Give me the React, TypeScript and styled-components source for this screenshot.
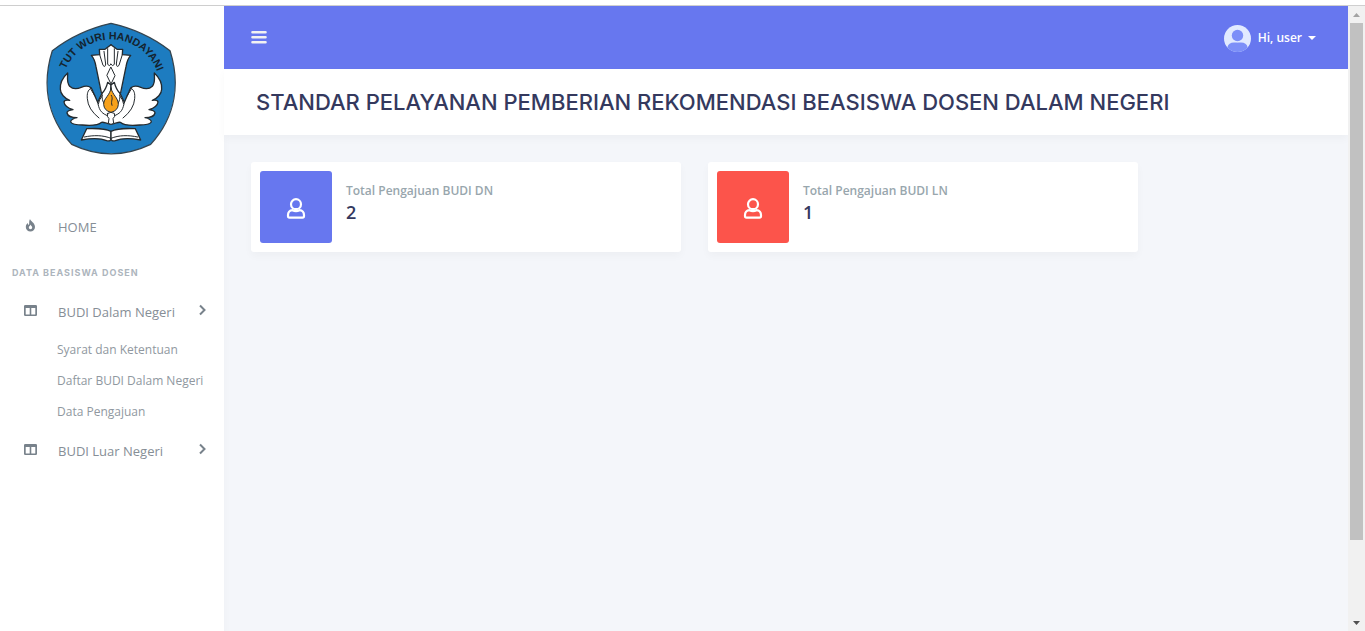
import React from "react";
import styled, { createGlobalStyle } from "styled-components";

const GlobalStyle = createGlobalStyle`
  *, *::before, *::after { box-sizing: border-box; }
  body {
    margin: 0;
    background: #f4f6fa;
    color: #34395e;
    font-family: "Open Sans", "Liberation Sans", sans-serif;
    font-size: 13px;
  }
  h1, h2, h3, p, ul { margin: 0; padding: 0; }
  ul { list-style: none; }
  a { color: inherit; text-decoration: none; }
  button { font: inherit; color: inherit; background: none; border: 0; padding: 0; cursor: pointer; }
`;

const Page = styled.div`
  display: flex;
  flex-direction: column;
  height: 100vh;
  overflow: hidden;
`;

const TopEdge = styled.div`
  flex: none;
  height: 6px;
  background: #fff;
  border-bottom: 1px solid #cfcfcf;
`;

const Shell = styled.div`
  flex: 1;
  min-height: 0;
  display: grid;
  grid-template-columns: 224px minmax(0, 1fr) 17px;
`;

const Sidebar = styled.aside`
  background: #fff;
  box-shadow: 0 4px 8px rgba(0, 0, 0, 0.03);
`;

const Brand = styled.a`
  display: flex;
  padding: 16px 0 53px 46px;
`;

const MenuItem = styled.a`
  display: flex;
  align-items: center;
  height: 36px;
  padding: 0 16px 0 24px;
  color: #868e96;
  font-size: 13px;

  svg { flex: none; }
  span { flex: 1; margin-left: 21px; padding-top: 2px; white-space: nowrap; }
`;

const MenuHeader = styled.h2`
  padding: 0 12px;
  margin: 20px 0 11px;
  font-family: Inter, "Open Sans", sans-serif;
  font-size: 9px;
  line-height: 18px;
  font-weight: 700;
  letter-spacing: 1px;
  color: #adb5bd;
  text-transform: uppercase;
`;

const SubMenu = styled.ul`
  padding: 5px 0;
`;

const SubLink = styled.a`
  display: block;
  padding-left: 57px;
  font-size: 12px;
  line-height: 31px;
  color: #9098a0;
  white-space: nowrap;
`;

const Main = styled.main`
  min-width: 0;
`;

const Navbar = styled.header`
  display: flex;
  align-items: center;
  justify-content: space-between;
  height: 63px;
  padding: 0 32px 0 27px;
  background: #6777ef;
  color: #fff;
`;

const ToggleButton = styled.button`
  display: flex;
`;

const UserButton = styled.button`
  display: flex;
  align-items: center;
  padding-top: 2px;
  font-size: 12px;
  font-weight: 600;
`;

const UserName = styled.span`
  margin: 0 6px 2px 7px;
`;

const TitleBar = styled.section`
  padding: 18px 32px;
  background: #fff;
  box-shadow: 0 4px 8px rgba(0, 0, 0, 0.03);
`;

const Title = styled.h1`
  font-family: Inter, "Open Sans", sans-serif;
  font-size: 22px;
  line-height: 30px;
  font-weight: 500;
  white-space: nowrap;
`;

const Cards = styled.section`
  display: grid;
  grid-template-columns: repeat(2, minmax(0, 430fr)) minmax(0, 156fr);
  gap: 27px;
  padding: 27px;
`;

const Card = styled.article`
  display: flex;
  gap: 14px;
  padding: 9px;
  background: #fff;
  border-radius: 3px;
  box-shadow: 0 4px 8px rgba(0, 0, 0, 0.03);
`;

const CardIcon = styled.div<{ $color: string }>`
  display: flex;
  align-items: center;
  justify-content: center;
  width: 72px;
  height: 72px;
  padding-top: 2px;
  border-radius: 3px;
  background: ${(p) => p.$color};
`;

const CardLabel = styled.h3`
  padding-top: 11px;
  font-size: 12px;
  line-height: 18px;
  font-weight: 600;
  color: #98a6ad;
`;

const CardValue = styled.p`
  font-size: 18px;
  line-height: 24px;
  font-weight: 600;
`;

const ScrollTrack = styled.div`
  display: flex;
  flex-direction: column;
  align-items: center;
  background: #f1f1f1;
`;

const ScrollArrow = styled.div`
  display: flex;
  align-items: center;
  height: 17px;
`;

const ScrollRun = styled.div`
  flex: 1;
  width: 13px;
`;

const ScrollThumb = styled.div`
  height: 87.5%;
  background: #c1c1c1;
`;

const Fire = () => (
  <svg width="13" height="17" viewBox="0 0 13 17" aria-hidden="true">
    <path fill="#78828b" fillRule="evenodd" d="M6 1C6.300 3 11 4.700 11 9A4.600 4.600 0 0 1 1.800 9C1.800 7.100 2.800 5.900 3.800 5.100C4 6.200 4.100 6.700 4.700 7C5.800 5.600 4.500 3.200 6 1ZM6.300 6.500C6.400 8 4.700 8.200 4.800 9.600A1.700 1.700 0 0 0 8.200 9.600C8.200 8.400 7.400 8.200 6.300 6.500Z" />
  </svg>
);

const Columns = () => (
  <svg width="13" height="15" viewBox="0 0 13 15" aria-hidden="true">
    <path fill="#78828b" fillRule="evenodd" d="M1.200 1H11.800Q13 1 13 2.200V10.800Q13 12 11.800 12H1.200Q0 12 0 10.800V2.200Q0 1 1.200 1ZM1.700 4V10.400H5.700V4ZM7.300 4V10.400H11.300V4Z" />
  </svg>
);

const Chevron = () => (
  <svg width="10" height="14" viewBox="0 0 10 14" aria-hidden="true">
    <path d="M2 1.500L6.500 6L2 10.500" fill="none" stroke="#78828b" strokeWidth="2" />
  </svg>
);

const Bars = () => (
  <svg width="16" height="16" viewBox="0 0 16 16" aria-hidden="true">
    <path d="M1.500 2.200H14.500M1.500 7.200H14.500M1.500 12.200H14.500" stroke="#f2f2f2" strokeWidth="2.600" strokeLinecap="round" />
  </svg>
);

const Avatar = () => (
  <svg width="27" height="27" viewBox="0 0 27 27" aria-hidden="true">
    <defs><clipPath id="avatar"><circle cx="13.500" cy="13.500" r="13.500" /></clipPath></defs>
    <g clipPath="url(#avatar)">
      <rect width="27" height="27" fill="#e1eaff" />
      <path d="M3.500 27V22Q4.500 17.500 10 17.500H17Q22.500 17.500 23.500 22V27Z" fill="#7c8ff8" />
      <circle cx="13.500" cy="10.700" r="6.600" fill="#e1eaff" />
      <circle cx="13.500" cy="10.500" r="5.700" fill="#7c8ff8" />
    </g>
  </svg>
);

const Caret = () => (
  <svg width="8" height="6" viewBox="0 0 8 6" aria-hidden="true"><path d="M0 0H8L4 4Z" fill="#fff" /></svg>
);

const Person = () => (
  <svg width="20" height="22" viewBox="0 0 20 22" aria-hidden="true">
    <g fill="none" stroke="#fff" strokeWidth="2.200">
      <circle cx="10" cy="7.200" r="5" />
      <path d="M6.500 13.200C3.500 13.200 2 15.500 2 18V19Q2 20.700 3.500 20.700H16.500Q18 20.700 18 19V18C18 15.500 16.500 13.200 13.500 13.200Q10 15 6.500 13.200Z" />
    </g>
  </svg>
);

const Arrow = ({ down = false }: { down?: boolean }) => (
  <svg width="7" height="4" viewBox="0 0 7 4" aria-hidden="true">
    <path d={down ? "M0 0H7L3.500 4Z" : "M0 4H7L3.500 0Z"} fill={down ? "#505050" : "#a3a3a3"} />
  </svg>
);

const EmblemHalf = () => (
  <>
    <path d="M214 92L196 106L179 106L180 122L155 124C164 134 167 145 169 158L186 246L214 262Z" fill="#fff" stroke="none" />
    <path d="M214 92L196 106L179 106L180 122L155 124C164 134 167 145 169 158L185 236" fill="none" />
    <path d="M180 122L190 154Q197 162 198 150L193 112M204 104V150Q209 160 214 150" fill="none" strokeWidth="3" />
    <path d="M214 330C200 331 195 323 186 325C176 334 150 335 128 333C112 333 98 332 93 324C92 318 103 312 112 311C96 311 84 306 82 297C82 291 92 288 100 287C84 282 74 273 73 264C74 259 82 258 90 259C75 253 62 239 62 226C60 203 72 188 84 177C85 188 79 202 90 217C104 230 118 222 133 217C148 214 157 221 160 233L174 265L187 238Q199 226 204 205L214 213Z" fill="#fff" />
    <path d="M155 222C143 228 142 240 143 254Q145 286 178 312M174 265C178 285 182 296 201 304M187 238C186 253 189 263 194 270M153 225L166 246M188 245Q177 258 176 270" fill="none" strokeWidth="3" />
    <path d="M214 352C195 342 170 343 141 344L125 378C152 373 180 371 201 380Q214 383 214 374Z" fill="#fff" />
    <path d="M134 369C162 363 190 363 214 373" fill="none" strokeWidth="3" />
  </>
);

const Emblem = () => (
  <svg width="131" height="133" viewBox="19 24 393 399" role="img" aria-label="Tut Wuri Handayani">
    <path d="M214 28C278 42 343 73 391 110C421 205 411 305 333 391C256 428 173 428 96 391C18 305 8 205 38 110C86 73 151 42 214 28Z" fill="#1d7cc0" stroke="#34444f" strokeWidth="4" strokeLinejoin="round" />
    <defs><path id="motto" d="M78 166A148 148 0 0 1 350 166L362 196" /></defs>
    <text fontFamily="Liberation Sans, sans-serif" fontWeight="700" fontSize="32" fill="#14232e">
      <textPath href="#motto">TUT WURI HANDAYANI</textPath>
    </text>
    <g stroke="#242a2e" strokeWidth="4" strokeLinejoin="round" strokeLinecap="round">
      <EmblemHalf />
      <g transform="translate(428 0) scale(-1 1)"><EmblemHalf /></g>
      <path d="M214 160L226 185L214 210L202 185Z" fill="#fff" strokeWidth="3" />
      <path d="M214 222C218 243 236 251 236 271Q235 290 214 295Q193 290 192 271C192 252 211 245 214 222Z" fill="#f7a11b" strokeWidth="3" />
      <path d="M215 244C222 256 212 260 217 274" fill="none" strokeWidth="3" />
      <path d="M204 298Q214 292 224 298Q228 308 220 314L222 328Q214 334 206 328L208 314Q200 308 204 298Z" fill="#fff" strokeWidth="3" />
    </g>
  </svg>
);

export default function App() {
  return (
    <Page>
      <GlobalStyle />
      <TopEdge />
      <Shell>
        <Sidebar>
          <Brand href="#"><Emblem /></Brand>
          <nav>
            <MenuItem href="#"><Fire /><span>HOME</span></MenuItem>
            <MenuHeader>Data Beasiswa Dosen</MenuHeader>
            <MenuItem href="#"><Columns /><span>BUDI Dalam Negeri</span><Chevron /></MenuItem>
            <SubMenu>
              <li><SubLink href="#">Syarat dan Ketentuan</SubLink></li>
              <li><SubLink href="#">Daftar BUDI Dalam Negeri</SubLink></li>
              <li><SubLink href="#">Data Pengajuan</SubLink></li>
            </SubMenu>
            <MenuItem href="#"><Columns /><span>BUDI Luar Negeri</span><Chevron /></MenuItem>
          </nav>
        </Sidebar>
        <Main>
          <Navbar>
            <ToggleButton aria-label="Toggle menu"><Bars /></ToggleButton>
            <UserButton><Avatar /><UserName>Hi, user</UserName><Caret /></UserButton>
          </Navbar>
          <TitleBar><Title>STANDAR PELAYANAN PEMBERIAN REKOMENDASI BEASISWA DOSEN DALAM NEGERI</Title></TitleBar>
          <Cards>
            <Card>
              <CardIcon $color="#6777ef"><Person /></CardIcon>
              <div><CardLabel>Total Pengajuan BUDI DN</CardLabel><CardValue>2</CardValue></div>
            </Card>
            <Card>
              <CardIcon $color="#fc544b"><Person /></CardIcon>
              <div><CardLabel>Total Pengajuan BUDI LN</CardLabel><CardValue>1</CardValue></div>
            </Card>
          </Cards>
        </Main>
        <ScrollTrack aria-hidden="true">
          <ScrollArrow><Arrow /></ScrollArrow>
          <ScrollRun><ScrollThumb /></ScrollRun>
          <ScrollArrow><Arrow down /></ScrollArrow>
        </ScrollTrack>
      </Shell>
    </Page>
  );
}
